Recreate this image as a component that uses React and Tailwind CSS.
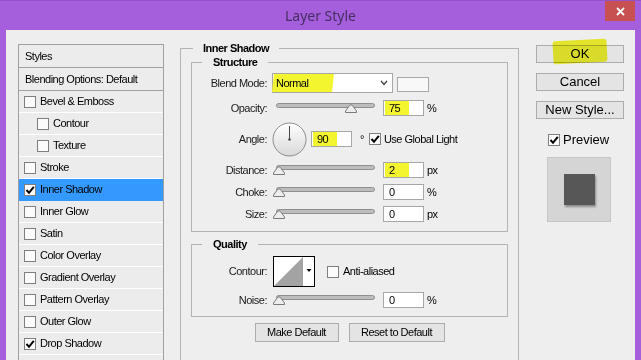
import React from "react";

const styleItems = [
  { label: "Bevel & Emboss", checked: false },
  { label: "Contour", checked: false, indent: true },
  { label: "Texture", checked: false, indent: true },
  { label: "Stroke", checked: false },
  { label: "Inner Shadow", checked: true, selected: true },
  { label: "Inner Glow", checked: false },
  { label: "Satin", checked: false },
  { label: "Color Overlay", checked: false },
  { label: "Gradient Overlay", checked: false },
  { label: "Pattern Overlay", checked: false },
  { label: "Outer Glow", checked: false },
  { label: "Drop Shadow", checked: true },
];

const Check = ({ checked }) => (
  <span className="w-[12px] h-[12px] border border-[#7f7f7f] bg-[#fbfbfb] flex items-center justify-center shrink-0">
    {checked && (
      <svg width="10" height="10" viewBox="0 0 10 10">
        <path d="M1.5 5 L4 7.8 L8.8 1.8" stroke="#000" strokeWidth="2" fill="none" />
      </svg>
    )}
  </span>
);

const Slider = ({ pos }) => (
  <svg width="104" height="14" viewBox="0 0 104 14" className="shrink-0">
    <rect x="4.5" y="2.5" width="98" height="4" rx="2" fill="#bdbdbd" stroke="#8f8f8f" />
    <path
      d="M0.5 8.5 L0.5 7 L4.5 1.5 Q6 0 7.5 1.5 L11.5 7 L11.5 8.5 Z"
      transform={`translate(${pos},3)`}
      fill="#ededed"
      stroke="#7a7a7a"
    />
  </svg>
);

const Field = ({ value, mark }) => (
  <div className="w-[41px] h-[16px] border border-[#a7a7a7] bg-white flex items-center shrink-0">
    {mark ? (
      <span className="ml-[1px] h-full w-[24px] bg-[#f3f52f] flex items-center pl-[4px]">{value}</span>
    ) : (
      <span className="pl-[5px]">{value}</span>
    )}
  </div>
);

const Label = ({ children }) => (
  <span className="w-[75px] text-right shrink-0 text-[#1a1a1a]">{children}</span>
);

const SliderRow = ({ label, pos, value, unit, mark, className = "" }) => (
  <div className={`h-[18px] flex items-center ${className}`}>
    <Label>{label}</Label>
    <span className="ml-[5px]">
      <Slider pos={pos} />
    </span>
    <span className="ml-[7px]">
      <Field value={value} mark={mark} />
    </span>
    <span className="ml-[3px]">{unit}</span>
  </div>
);

const WinButton = ({ children, className = "" }) => (
  <div className={`h-[18px] border border-[#acacac] bg-[#e4e4e4] flex items-center justify-center ${className}`}>
    {children}
  </div>
);

export default function App() {
  return (
    <div className="w-[641px] h-[360px] overflow-hidden bg-[#a55fdc] flex flex-col font-['Liberation_Sans',Arial,sans-serif] text-[11px] tracking-[-0.5px] text-black">
      {/* Title bar */}
      <div className="relative h-[30px] flex items-center justify-center shrink-0 border-t border-[#9552c8]">
        <span className="font-['Noto_Sans',sans-serif] text-[14px] tracking-normal text-[#472d63]">Layer Style</span>
        <div className="absolute right-[6px] top-0 w-[30px] h-[20px] bg-[#c75050] flex items-center justify-center">
          <svg width="9" height="9" viewBox="0 0 9 9">
            <path d="M1 1 L8 8 M8 1 L1 8" stroke="#fff" strokeWidth="1.8" />
          </svg>
        </div>
      </div>

      {/* Dialog body */}
      <div className="mx-[6px] flex-1 bg-[#eeeeee] flex items-start pl-[12px] overflow-hidden">
        {/* Styles list */}
        <div className="w-[146px] h-[340px] mt-[14px] border border-[#a0a0a0] bg-[#ececec] shrink-0">
          <div className="h-[23px] border-b border-[#a0a0a0] flex items-center pl-[6px]">Styles</div>
          <div className="h-[23px] border-b border-[#a0a0a0] flex items-center pl-[6px]">Blending Options: Default</div>
          {styleItems.map((it) => (
            <div
              key={it.label}
              className={`h-[22px] border-b flex items-center gap-[4px] ${it.indent ? "pl-[18px]" : "pl-[5px]"} ${
                it.selected ? "bg-[#3399ff] border-[#3399ff]" : "border-white"
              }`}
            >
              <Check checked={it.checked} />
              <span>{it.label}</span>
            </div>
          ))}
          <div className="h-[22px]" />
        </div>

        {/* Main settings */}
        <div className="w-[339px] ml-[16px] mt-[11px] shrink-0">
          <fieldset className="border border-[#b3b3b3] px-[10px] h-[400px]">
            <legend className="ml-[2px] px-[10px] font-bold leading-[14px]">Inner Shadow</legend>

            <fieldset className="border border-[#b3b3b3] pt-[4px] pb-[8px]">
              <legend className="ml-[10px] px-[11px] font-bold leading-[14px]">Structure</legend>

              <div className="h-[20px] flex items-center">
                <Label>Blend Mode:</Label>
                <div className="ml-[5px] w-[121px] h-[20px] border border-[#a7a7a7] bg-white flex items-center justify-between pr-[4px]">
                  <span className="h-full w-[60px] bg-[#f3f52f] flex items-center pl-[3px] -skew-x-6">
                    <span className="skew-x-6">Normal</span>
                  </span>
                  <svg width="8" height="6" viewBox="0 0 8 6">
                    <path d="M1 1 L4 4.5 L7 1" stroke="#444" strokeWidth="1.4" fill="none" />
                  </svg>
                </div>
                <div className="ml-[4px] w-[32px] h-[15px] border border-[#a7a7a7] bg-[#f8f8f8] mt-[2px]" />
              </div>

              <SliderRow label="Opacity:" pos={73} value="75" unit="%" mark className="mt-[6px]" />

              <div className="h-[36px] flex items-center mt-[4px]">
                <Label>Angle:</Label>
                <svg width="35" height="35" viewBox="0 0 35 35" className="ml-[5px] shrink-0">
                  <defs>
                    <linearGradient id="dial" x1="0" y1="0" x2="0" y2="1">
                      <stop offset="0" stopColor="#ffffff" />
                      <stop offset="1" stopColor="#d9d9d9" />
                    </linearGradient>
                  </defs>
                  <circle cx="17.5" cy="17.5" r="16.5" fill="url(#dial)" stroke="#8c8c8c" />
                  <line x1="17.5" y1="17.5" x2="17.5" y2="4" stroke="#4a4a4a" strokeWidth="1" />
                  <circle cx="17.5" cy="17.5" r="1.3" fill="#4a4a4a" />
                </svg>
                <span className="ml-[4px]">
                  <Field value="90" mark />
                </span>
                <span className="ml-[8px]">°</span>
                <span className="ml-[5px] flex items-center gap-[3px]">
                  <Check checked />
                  <span>Use Global Light</span>
                </span>
              </div>

              <SliderRow label="Distance:" pos={1} value="2" unit="px" mark className="mt-[4px]" />
              <SliderRow label="Choke:" pos={1} value="0" unit="%" className="mt-[4px]" />
              <SliderRow label="Size:" pos={1} value="0" unit="px" className="mt-[4px]" />
            </fieldset>

            <fieldset className="border border-[#b3b3b3] mt-[5px] pt-[5px] pb-[7px]">
              <legend className="ml-[10px] px-[11px] font-bold leading-[14px]">Quality</legend>

              <div className="h-[31px] flex items-center">
                <Label>Contour:</Label>
                <svg width="42" height="31" viewBox="0 0 42 31" className="ml-[6px] shrink-0">
                  <rect x="0.5" y="0.5" width="41" height="30" fill="#fff" stroke="#000" />
                  <path d="M1 30 L30 1 L30 30 Z" fill="#a3a3a3" />
                  <path d="M33.5 13 L38.5 13 L36 16 Z" fill="#000" />
                </svg>
                <span className="ml-[12px] flex items-center gap-[4px]">
                  <Check checked={false} />
                  <span>Anti-aliased</span>
                </span>
              </div>

              <SliderRow label="Noise:" pos={1} value="0" unit="%" className="mt-[4px]" />
            </fieldset>

            <div className="mt-[6px] flex justify-center gap-[10px]">
              <WinButton className="w-[84px] h-[19px]">Make Default</WinButton>
              <WinButton className="w-[96px] h-[19px]">Reset to Default</WinButton>
            </div>
          </fieldset>
        </div>

        {/* Right column */}
        <div className="w-[88px] ml-[17px] mt-[15px] shrink-0 text-[13px] tracking-normal">
          <div className="relative">
            <WinButton className="border-[#3c7fb1]">OK</WinButton>
            <div className="absolute left-[17px] top-[-5px] w-[54px] h-[23px] bg-[#f3f52f] mix-blend-multiply -rotate-3 rounded-[3px]" />
          </div>
          <WinButton className="mt-[10px]">Cancel</WinButton>
          <WinButton className="mt-[10px]">New Style...</WinButton>
          <div className="mt-[11px] pl-[12px] flex items-center gap-[3px]">
            <Check checked />
            <span>Preview</span>
          </div>
          <div className="mt-[7px] ml-[11px] w-[64px] h-[65px] bg-[#d5d5d5] border border-[#c6c6c6] flex items-center justify-center">
            <div className="w-[31px] h-[31px] bg-[#575757] shadow-[1px_2px_2px_rgba(0,0,0,0.35)]" />
          </div>
        </div>
      </div>
    </div>
  );
}
